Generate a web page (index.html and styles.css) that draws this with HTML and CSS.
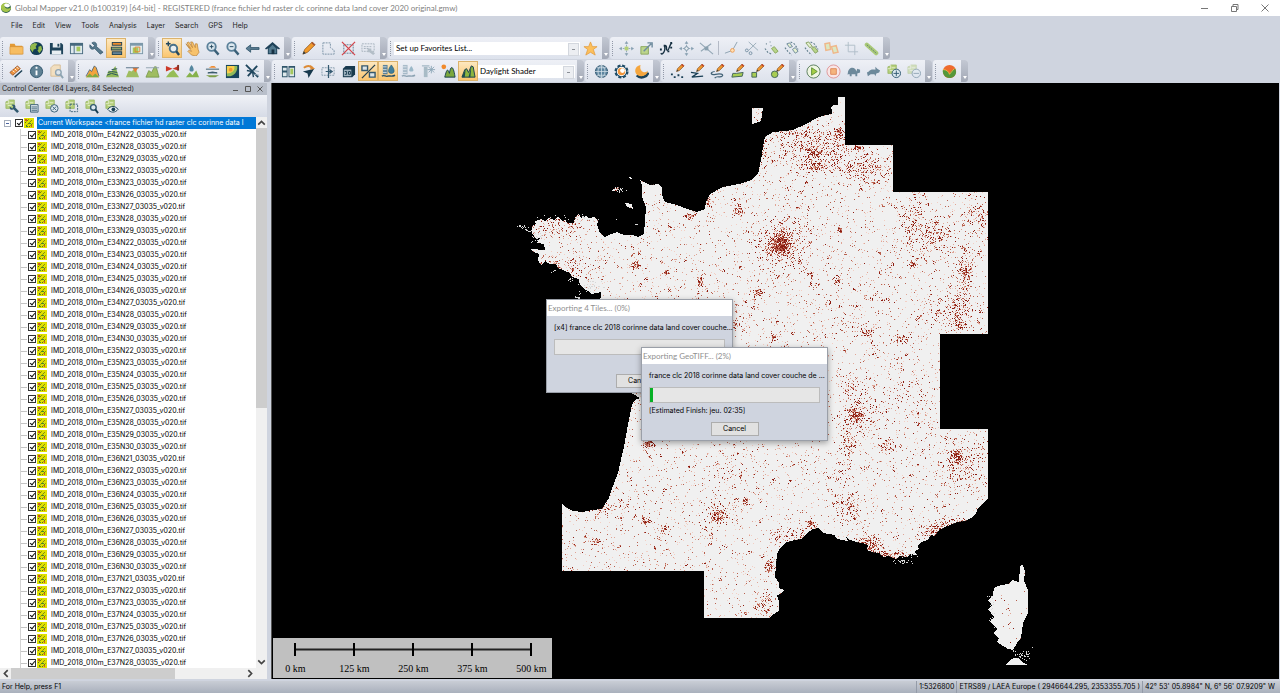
FILE: index.html
```html
<!DOCTYPE html>
<html lang="en">
<head>
    <meta charset="UTF-8">
    <meta name="viewport" content="width=device-width, initial-scale=1.0">
    <title>Global Mapper v21.0</title>
    <link rel="stylesheet" href="styles.css">
</head>
<body>

<!-- Shapes shared by several toolbar icons -->
<svg class="sprite" aria-hidden="true">
    <symbol id="doc" viewBox="0 0 16 16"><path d="M2 3l3-1v-1h6v9H2z" fill="#b5cf7c" stroke="#8eae55" stroke-width=".7"/><path d="M2 5h3V1M6 4h4M4 7h4" fill="none" stroke="#e3edc9"/></symbol>
    <symbol id="pencil" viewBox="0 0 16 16"><path d="M7 8l1-3 5-5 2 2-5 5z" fill="#ee9630" stroke="#7a4a1a" stroke-width=".7"/><path d="M12 1l2 2 1-1-2-2z" fill="#c8402a"/><path d="M7 8l1-2 1 1z" fill="#1f3545"/></symbol>
    <symbol id="lens" viewBox="0 0 16 16"><circle cx="7" cy="6" r="4.500" fill="#dce8ef" stroke="#5b819a" stroke-width="2"/><path d="M10 9.500l4.500 5" stroke="#3a6078" stroke-width="2.500"/></symbol>
    <symbol id="arrows" viewBox="0 0 16 16"><path d="M8 1v14M1 8h14" stroke="#8fa6b6" stroke-dasharray="2 1"/><path d="M8 0l2 3H6zM8 16l2-3H6zM0 8l3-2v4zM16 8l-3-2v4z" fill="#8aa2b3"/></symbol>
    <symbol id="chain" viewBox="0 0 16 16"><path d="M1 7l3 4 4 4M7 1l4 2 4 6" fill="none" stroke="#64808f" stroke-dasharray="2 1.5" stroke-width="1.200"/></symbol>
    <symbol id="well" viewBox="0 0 16 16"><path d="M2 1h5v10H2z" fill="#5d8398"/><path d="M2 3h4M2 6h4M2 9h4" stroke="#cddae2"/><path d="M1 13c2-2 4 1 6 0s4 1 8-1" fill="none" stroke="#24506a" stroke-width="1.500"/></symbol>
</svg>

<div class="window">
    <header class="titlebar">
        <svg class="logo" viewBox="0 0 12 12"><circle cx="6" cy="6" r="5" fill="#2d5f47"/><path d="M1 4a5 5 0 0 1 8-2C6 1 4 3 5 5s4 2 6 0c0 6-9 7-10 1z" fill="#a6c64b"/><path d="M4 3c2-3 6-1 6 1-1 2-5 2-6-1z" fill="#fff"/></svg>
        <h1>Global Mapper v21.0 (b100319) [64-bit] - REGISTERED (france fichier hd raster clc corinne data land cover 2020 original.gmw)</h1>
        <div class="window-buttons">
            <button aria-label="Minimize"><svg viewBox="0 0 8 8"><path d="M0 4.500h7"/></svg></button>
            <button aria-label="Restore"><svg viewBox="0 0 8 8"><path d="M.5 2.500h5v5h-5zM2 2V.5h5v5H6"/></svg></button>
            <button aria-label="Close"><svg viewBox="0 0 8 8"><path d="M.5.5l7 7M7.500.5l-7 7"/></svg></button>
        </div>
    </header>

    <nav class="menu">
        <button>File</button><button>Edit</button><button>View</button><button>Tools</button><button>Analysis</button><button>Layer</button><button>Search</button><button>GPS</button><button>Help</button>
    </nav>

    <div class="toolbar-row">
        <div class="toolbar">
            <button class="tool" aria-label="Open"><svg viewBox="0 0 16 16"><path d="M1 3h5l1 2h7v9H1z" fill="#e39a35"/><path d="M1 6h14v8H1z" fill="#f7bd61" stroke="#cf8a2c" stroke-width=".6"/></svg></button>
            <button class="tool" aria-label="Online data"><svg viewBox="0 0 16 16"><circle cx="8" cy="8" r="7" fill="#123d54"/><path d="M2 4l4-2 3 1-2 3 1 2-3 1-1 3-3-4zM10 6l3-1 1 4-3 4-2-3 1-1z" fill="#92b94d"/></svg></button>
            <button class="tool" aria-label="Save"><svg viewBox="0 0 16 16"><path d="M1 2h12l2 2v10H1z" fill="#1e435a"/><path d="M4 2h8v5H4zM3 10h10v4H3z" fill="#e8eef2"/><path d="M9 3h2v3H9z" fill="#1e435a"/></svg></button>
            <button class="tool" aria-label="Map layout"><svg viewBox="0 0 16 16"><path d="M1 2h14v12H1z" fill="#47697e"/><path d="M2 5h3v8H2zM6 5h8v8H6z" fill="#dfe9ee"/><path d="M8 6h4v5H8z" fill="#a7c85c"/></svg></button>
            <button class="tool" aria-label="Configuration"><svg viewBox="0 0 16 16"><path d="M3 2l3 3-2 2-3-3c-1 4 2 6 5 4l6 6 3-2-7-6c1-4-2-6-5-4z" fill="#56788c" stroke="#274c61" stroke-width=".7"/></svg></button>
            <button class="tool on" aria-label="Control center"><svg viewBox="0 0 16 16"><path d="M3 1h11v4H3zM2 6h12v4H2zM3 11h11v4H3z" fill="#244658"/><path d="M4 2h9v2H4z" fill="#ef8c2b"/><path d="M3 7h10v2H3z" fill="#8ca06a"/><path d="M4 12h9v2H4z" fill="#648497"/></svg></button>
            <button class="tool" aria-label="Overview map"><svg viewBox="0 0 16 16"><path d="M1 2h14v12H1z" fill="#7d99aa"/><path d="M2 5h12v8H2z" fill="#dfe9ee"/><path d="M4 7h6v6H4z" fill="#a7c85c"/><path d="M6.500 6.500h5v5h-5z" fill="none" stroke="#e0862f"/></svg></button>
            <button class="more" aria-label="Toolbar options"></button>
        </div>
        <div class="toolbar">
            <button class="tool on" aria-label="Zoom tool"><svg viewBox="0 0 16 16"><circle cx="9" cy="8" r="4" fill="#e9eef0" stroke="#47708a" stroke-width="2"/><path d="M12 11l3 4" stroke="#24485e" stroke-width="2.500"/><path d="M1 3h5M3.500.5v5" stroke="#24485e" stroke-width="1.500"/></svg></button>
            <button class="tool" aria-label="Pan"><svg viewBox="0 0 16 16"><path d="M1 3l5 5-4-6 2-1 4 6-2-6h2l3 6 0-4 2 0 1 6 1 3-3 4-5-1-4-4 1-1 3 1-4-5z" fill="#f7c26c" stroke="#b57b31" stroke-width=".7"/></svg></button>
            <button class="tool" aria-label="Zoom in"><svg viewBox="0 0 16 16"><use href="#lens"/><path d="M5 6h4M7 4v4" stroke="#24485e"/></svg></button>
            <button class="tool" aria-label="Zoom out"><svg viewBox="0 0 16 16"><use href="#lens"/><path d="M5 6h4" stroke="#24485e"/></svg></button>
            <button class="tool" aria-label="Previous view"><svg viewBox="0 0 16 16"><path d="M1 8l5-4v3h9v2H6v3z" fill="#5d7e93" stroke="#244b62" stroke-width=".8"/></svg></button>
            <button class="tool" aria-label="Full view"><svg viewBox="0 0 16 16"><path d="M8 1l8 7-1 1-2-1v6H3V8L1 9 0 8z" fill="#1f4259"/><path d="M4 8l4-4 4 4v5H4z" fill="#547b90"/><path d="M7 9h3v5H7z" fill="#173244"/></svg></button>
            <button class="more" aria-label="Toolbar options"></button>
        </div>
        <div class="toolbar">
            <button class="tool" aria-label="Digitizer"><svg viewBox="0 0 16 16"><path d="M2 14l2-5 8-8 3 3-8 8z" fill="#f19a2b" stroke="#8b5016" stroke-width=".8"/><path d="M12 1l3 3-1 1-3-3z" fill="#a55031"/><path d="M2 14l1-3 2 2z" fill="#233948"/></svg></button>
            <button class="tool" aria-label="Select area"><svg viewBox="0 0 16 16"><path d="M2 2h8v5l4 3v4H2z" fill="none" stroke="#7890a4" stroke-dasharray="2 1"/></svg></button>
            <button class="tool" aria-label="Clear selection"><svg viewBox="0 0 16 16"><path d="M3 4h10v9H3z" fill="none" stroke="#5f7d91" stroke-dasharray="2 1"/><path d="M1 1l14 14M15 1L1 15" stroke="#d4434a" stroke-width="1.300"/></svg></button>
            <button class="tool" aria-label="Edit selection"><svg viewBox="0 0 16 16"><path d="M1 3h13v8H1zM3 6h9M3 8h6" fill="none" stroke="#a5b1bc" stroke-dasharray="2 1"/><path d="M7 8h4v2l4 3-2 2-4-3H7z" fill="#b3bec7"/></svg></button>
            <button class="more" aria-label="Toolbar options"></button>
        </div>
        <div class="toolbar">
            <div class="combo combo-wide"><select aria-label="Favorites"><option>Set up Favorites List...</option></select></div>
            <button class="tool" aria-label="Add favorite"><svg viewBox="0 0 16 16"><path d="M8 1l2 5h5l-4 3 2 6-5-3-5 3 2-6-4-3h5z" fill="#fcc05d" stroke="#e39b3c" stroke-width=".8"/></svg></button>
            <button class="more" aria-label="Toolbar options"></button>
        </div>
        <div class="toolbar">
            <button class="tool" aria-label="Move"><svg viewBox="0 0 16 16"><use href="#arrows"/><path d="M6 6h4v4H6z" fill="#b4d077"/></svg></button>
            <button class="tool" aria-label="Scale"><svg viewBox="0 0 16 16"><path d="M2 6h8v8H2z" fill="#bcd58c" stroke="#8ca85e"/><path d="M5 11l8-8M9 2h5v5" fill="none" stroke="#6e8b9e" stroke-width="1.500"/></svg></button>
            <button class="tool" aria-label="Reshape"><svg viewBox="0 0 16 16"><path d="M2 13c1 2 3 0 4-3S5 5 7 5s0 5 2 5 2-7 5-8" fill="none" stroke="#152f40" stroke-width="1.500"/><path d="M1 8h2v2H1zM5 4h2v2H5zM9 10h2v2H9zM12 1h2v2h-2zM12 6h2v2h-2z" fill="#152f40"/></svg></button>
            <button class="tool" aria-label="Move vertex"><svg viewBox="0 0 16 16"><use href="#arrows"/><circle cx="8" cy="8" r="2" fill="#e7edf1" stroke="#758fa1"/></svg></button>
            <button class="tool" aria-label="Rotate"><svg viewBox="0 0 16 16"><path d="M1 2l14 12M2 11l11-8" stroke="#93a7b5" stroke-width="1.200"/><path d="M6 6h4v4H6z" fill="#8aa0af"/></svg></button>
            <span class="sep"></span>
            <button class="tool" aria-label="Join"><svg viewBox="0 0 16 16"><path d="M1 13l8-3 5-9" fill="none" stroke="#8ba0af"/><circle cx="9" cy="10" r="2" fill="#ffe0b5" stroke="#ed9c54"/></svg></button>
            <button class="tool" aria-label="Split"><svg viewBox="0 0 16 16"><path d="M5 1l10 9M5 10l8-8" stroke="#98abb8"/><circle cx="3" cy="10" r="1.500" fill="none" stroke="#7891a4"/><circle cx="7" cy="13" r="1.500" fill="none" stroke="#7891a4"/></svg></button>
            <button class="tool" aria-label="Points to line"><svg viewBox="0 0 16 16"><path d="M1 8l3 4 4 2M2 3h1M6 1h1M7 5h1" fill="none" stroke="#64808f" stroke-dasharray="2 1.500" stroke-width="1.200"/><path d="M8 8l3-2 4 5-3 2z" fill="#b9d58a" stroke="#8aa85c"/></svg></button>
            <button class="tool" aria-label="Lines to area"><svg viewBox="0 0 16 16"><use href="#chain"/><path d="M3 3l3-1 3 4-3 1zM9 9l3-2 3 4-3 2z" fill="#e5efcf" stroke="#6d899b"/></svg></button>
            <button class="tool" aria-label="Area to lines"><svg viewBox="0 0 16 16"><use href="#chain"/><path d="M2 2l3-1 4 5-3 1z" fill="#e5efcf" stroke="#85a060"/><path d="M8 8l3-2 4 5-3 2z" fill="#b9d58a" stroke="#85a060"/></svg></button>
            <button class="tool" aria-label="Combine"><svg viewBox="0 0 16 16"><path d="M1 3l5-1 1 7-5 1zM8 6l5-1 2 7-5 1z" fill="#dbe8c2" stroke="#efb78a" stroke-width="1.500"/></svg></button>
            <button class="tool" aria-label="Crop"><svg viewBox="0 0 16 16"><path d="M4.500 1v10.500H15M1 4.500h10.500V15" fill="none" stroke="#b0bec9"/></svg></button>
            <button class="tool" aria-label="Buffer"><svg viewBox="0 0 16 16"><path d="M3 4l10 9" stroke="#a9c977" stroke-width="4.500" stroke-linecap="round"/><path d="M3 4l10 9" stroke="#5f8070" stroke-dasharray="2 1"/></svg></button>
            <button class="more" aria-label="Toolbar options"></button>
        </div>
    </div>

    <div class="toolbar-row">
        <div class="toolbar">
            <button class="tool" aria-label="Measure"><svg viewBox="0 0 16 16"><path d="M1 9l8-7 3 3-8 7z" fill="#ef9540" stroke="#9b5525"/><path d="M6 14l8-7" stroke="#1d4055" stroke-width="1.500"/><path d="M4 7l2 2M6 5l2 2M8 3l2 2" stroke="#fff"/></svg></button>
            <button class="tool" aria-label="Feature info"><svg viewBox="0 0 16 16"><circle cx="8" cy="8" r="6.500" fill="#5f8194" stroke="#2d536a"/><path d="M8 7v5M8 3v2" stroke="#fff" stroke-width="2"/></svg></button>
            <button class="tool" aria-label="Search features"><svg viewBox="0 0 16 16"><path d="M2 4l3-3h7v12H2z" fill="#f2dfc0" stroke="#d6bd95"/><circle cx="10" cy="9" r="3" fill="#dfe6ea" stroke="#8fa5b3" stroke-width="1.500"/><path d="M12 11l3 4" stroke="#8fa5b3" stroke-width="2"/></svg></button>
            <button class="more" aria-label="Toolbar options"></button>
        </div>
        <div class="toolbar">
            <button class="tool" aria-label="Elevation"><svg viewBox="0 0 16 16"><path d="M1 14l4-8 2 2 3-6 2 2 3 10z" fill="#f3a43e"/><path d="M1 14l4-4 3 3 3-3 4 4z" fill="#7eab43"/><path d="M1 13l4-7 2 2 3-6 2 2 3 9" fill="none" stroke="#36536a" stroke-width=".8"/></svg></button>
            <button class="tool" aria-label="Contours"><svg viewBox="0 0 16 16"><path d="M1 14l3-7 3 1 4-6 4 12z" fill="#93b95a"/><path d="M2 12l5-2 7 2M3 9l4-1 6 1M7 6l6-1" fill="none" stroke="#28525a"/></svg></button>
            <button class="tool" aria-label="Watershed"><svg viewBox="0 0 16 16"><path d="M1 14l3-7 3 1 4-4 4 10z" fill="#9fbd60"/><path d="M8 4h6l-3 5z" fill="#e97c35"/><path d="M1 4h14" stroke="#547083"/></svg></button>
            <button class="tool" aria-label="Volume"><svg viewBox="0 0 16 16"><path d="M1 14l3-7 3 2 3-6h2l3 11z" fill="#9fbd60" stroke="#698b3d" stroke-width=".7"/><path d="M1 4h14" stroke="#91a3ae"/></svg></button>
            <button class="tool" aria-label="View shed"><svg viewBox="0 0 16 16"><path d="M1 14l4-5 4-3 6 8z" fill="#96bd55"/><path d="M1 2l7 3 6-3v5L8 5 1 8z" fill="#cd3928"/><path d="M13 1h2v6h-2z" fill="#873326"/></svg></button>
            <button class="tool" aria-label="Water drop"><svg viewBox="0 0 16 16"><path d="M1 14l4-5 3 3 4-5 3 7z" fill="#86b24c"/><path d="M7 1c3 4 3 7 0 7s-3-3 0-7z" fill="#55879f"/></svg></button>
            <button class="tool" aria-label="Flatten"><svg viewBox="0 0 16 16"><path d="M4 4l3-2h3l2 2z" fill="#ef8d35"/><path d="M1 5.500h14M3 9.500l5-1 5 1z" fill="#365769" stroke="#365769"/><path d="M1 12h14l-4 2H5z" fill="#7c9d48"/></svg></button>
            <button class="tool" aria-label="Grid"><svg viewBox="0 0 16 16"><path d="M1 1h14v14H1z" fill="#17455d"/><path d="M2 2h11c1 6-4 12-11 11z" fill="#90bb59"/><path d="M2 2h8c1 5-3 8-8 8z" fill="#f9cf4d"/><circle cx="6" cy="6" r="2" fill="#ed9a32"/></svg></button>
            <button class="tool" aria-label="Fly through"><svg viewBox="0 0 16 16"><path d="M1 1l13 13M3 13L13 2" stroke="#1f465d" stroke-width="2"/><path d="M2 7l6 1 1 6" fill="none" stroke="#1f465d" stroke-width="1.500"/><path d="M9 7l6 1M10 11l5 1" stroke="#8fa5b3"/></svg></button>
            <button class="more" aria-label="Toolbar options"></button>
        </div>
        <div class="toolbar">
            <button class="tool" aria-label="Multi view"><svg viewBox="0 0 16 16"><path d="M1 2h6v12H1zM8 2h7v12H8z" fill="#30566b"/><path d="M2 4h4v3H2zM2 9h4v4H2zM9 4h5v9H9z" fill="#dfe9ec"/><path d="M10 5h3v6h-3z" fill="#a4c75d"/></svg></button>
            <button class="tool" aria-label="Navigate"><svg viewBox="0 0 16 16"><path d="M14 5L8 15 7 10 2 8z" fill="#17394d"/><path d="M3 4c4-3 7-2 9 0" fill="none" stroke="#dd8b36" stroke-width="2"/><path d="M10 1l5 4-5 1z" fill="#dd8b36"/></svg></button>
            <button class="tool" aria-label="Path profile"><svg viewBox="0 0 16 16"><path d="M1 4h13v8H1z" fill="none" stroke="#8199aa" stroke-dasharray="2 1"/><path d="M8 1v14M5 8h7" stroke="#355a71" stroke-width="1.300"/><path d="M9 5l4 3-4 3z" fill="#355a71"/></svg></button>
            <button class="tool" aria-label="3D view"><svg viewBox="0 0 16 16"><path d="M2 5l3-3h10v9l-3 3H2z" fill="#183a4e"/><path d="M3 6h8v7H3z" fill="#9eb2bf"/><path d="M4 8h2v3H4M8 8h2v3H8z" fill="none" stroke="#183a4e"/></svg></button>
            <button class="tool on" aria-label="Auto-clip"><svg viewBox="0 0 16 16"><path d="M1 15L15 1" stroke="#243f4d" stroke-width="1.300"/><path d="M1 2h6v5H1zM9 9h6v5H9z" fill="#dbe5e9" stroke="#34586d" stroke-width="1.500"/></svg></button>
            <button class="tool on" aria-label="Water level"><svg viewBox="0 0 16 16"><use href="#well"/><path d="M11 1c4 5 4 9 0 9s-4-4 0-9z" fill="#417f9c" stroke="#1f546e" stroke-width=".6"/></svg></button>
            <button class="tool" aria-label="Water rise"><svg viewBox="0 0 16 16"><use href="#well" opacity=".45"/><path d="M11 2c3 4 3 6 0 6s-3-2 0-6z" fill="#9bb8c8"/></svg></button>
            <button class="tool" aria-label="Snow level"><svg viewBox="0 0 16 16"><path d="M3 3h4v11H3z" fill="#a8bbc6"/><path d="M1 2h8M11 2v8M7 6h8M8 3l6 6M14 3L8 9" stroke="#8ea8b8"/></svg></button>
            <button class="tool" aria-label="Sun shading"><svg viewBox="0 0 16 16"><path d="M4 14c2-8 3-10 5-4 1-8 4-10 6 4z" fill="#7ba83d" stroke="#183e50"/><circle cx="3" cy="3" r="2.500" fill="#f18a2b"/></svg></button>
            <button class="tool on" aria-label="Hill shading"><svg viewBox="0 0 16 16"><path d="M1 14L4 6l2-1 2 4 3-7 2 1 2 11z" fill="#8bb53f" stroke="#183e50"/><path d="M1 14L5 5l-1 9zM8 14l3-12-1 12z" fill="#1d4d50"/></svg></button>
            <div class="combo combo-narrow"><select aria-label="Shader"><option>Daylight Shader</option></select></div>
            <button class="more" aria-label="Toolbar options"></button>
        </div>
        <div class="toolbar">
            <button class="tool" aria-label="Projection"><svg viewBox="0 0 16 16"><circle cx="8" cy="8" r="6.500" fill="#5e86a0" stroke="#2d536d"/><path d="M1 8h14M8 1v14M3 4h10M3 12h10M8 1C3 5 3 11 8 15M8 1c5 4 5 10 0 14" fill="none" stroke="#d5e2e9" stroke-width=".8"/></svg></button>
            <button class="tool" aria-label="Day and night"><svg viewBox="0 0 16 16"><circle cx="8" cy="8" r="6" fill="#1d4b66" stroke="#1d4b66" stroke-width="3" stroke-dasharray="3 1.700"/><circle cx="8" cy="8" r="5" fill="#fff"/><circle cx="8" cy="8" r="4" fill="#f0953b"/><circle cx="9" cy="7" r="2.500" fill="#fff"/></svg></button>
            <button class="tool" aria-label="Night"><svg viewBox="0 0 16 16"><path d="M3 12c4 4 11 2 12-3" fill="none" stroke="#1b4259" stroke-width="3"/><path d="M7 1C0 2 0 10 4 12s10 1 11-5c-3 4-10 1-8-6z" fill="#f5a63e"/></svg></button>
            <button class="more" aria-label="Toolbar options"></button>
        </div>
        <div class="toolbar">
            <button class="tool" aria-label="New point"><svg viewBox="0 0 16 16"><use href="#pencil"/><path d="M1 10h2v2H1zM4 13h2v2H4zM8 11h2v2H8zM12 13h2v2h-2z" fill="#183e54"/></svg></button>
            <button class="tool" aria-label="New line"><svg viewBox="0 0 16 16"><use href="#pencil"/><path d="M1 9l7 1-6 4 12-1" fill="none" stroke="#183e54" stroke-width="1.300"/></svg></button>
            <button class="tool" aria-label="Trace line"><svg viewBox="0 0 16 16"><use href="#pencil"/><path d="M5 8c-6 1-4 4 1 3s9 0 7 2-6-1-8 2" fill="none" stroke="#426276" stroke-width="1.300"/></svg></button>
            <button class="tool" aria-label="New area"><svg viewBox="0 0 16 16"><use href="#pencil"/><path d="M3 10l4 0 7-1-1 4-11 1z" fill="#a8cd53" stroke="#41625b"/></svg></button>
            <button class="tool" aria-label="New rectangle"><svg viewBox="0 0 16 16"><use href="#pencil"/><path d="M2 9h5v5H2z" fill="#a8cd53" stroke="#41625b"/></svg></button>
            <button class="tool" aria-label="New circle"><svg viewBox="0 0 16 16"><use href="#pencil"/><circle cx="5" cy="11" r="3.500" fill="#a8cd53" stroke="#41625b"/></svg></button>
            <button class="more" aria-label="Toolbar options"></button>
        </div>
        <div class="toolbar">
            <button class="tool" aria-label="Play"><svg viewBox="0 0 16 16"><circle cx="8" cy="8" r="7" fill="#eff6e2" stroke="#5a7d5e"/><path d="M6 4l6 4-6 4z" fill="#a6cf46" stroke="#5d8f36"/></svg></button>
            <button class="tool" aria-label="Stop"><svg viewBox="0 0 16 16"><circle cx="8" cy="8" r="7" fill="#f8e6e6" stroke="#df9699"/><path d="M5 5h6v6H5z" fill="#f4b57e" stroke="#df8a5b"/></svg></button>
            <button class="tool" aria-label="Slower"><svg viewBox="0 0 16 16"><path d="M2 10c0-7 8-8 9-2l1-3 3 1v3l-3 1v3h-2v-2H6v2H4v-2H1z" fill="#6d899b"/></svg></button>
            <button class="tool" aria-label="Faster"><svg viewBox="0 0 16 16"><path d="M1 9l2-1c2-3 5-2 7-2l0-3 2 2 3 2-1 2-3 1-1 3-1-2-4 0-3 2z" fill="#6d899b"/></svg></button>
            <button class="tool" aria-label="Add layer"><svg viewBox="0 0 16 16"><use href="#doc"/><circle cx="11" cy="10" r="4.500" fill="#dce8ef" stroke="#315a73"/><path d="M8 10h6M11 7v6" stroke="#315a73"/></svg></button>
            <button class="tool" aria-label="Remove layer"><svg viewBox="0 0 16 16"><g opacity=".45"><use href="#doc"/><circle cx="11" cy="10" r="4.500" fill="#dce8ef" stroke="#315a73"/><path d="M8 10h6" stroke="#315a73"/></g></svg></button>
            <button class="more" aria-label="Toolbar options"></button>
        </div>
        <div class="toolbar">
            <button class="tool" aria-label="LiDAR"><svg viewBox="0 0 16 16"><circle cx="8" cy="8" r="7" fill="#ee6b2d"/><path d="M1 6c4 0 6 2 7 5 1-3 3-5 6-6 3 5-1 10-6 10-5 0-8-5-7-9z" fill="#54983c"/><path d="M8 11C7 8 5 6 1 6M8 11l5-6" fill="none" stroke="#f9c04b" stroke-width=".8"/></svg></button>
            <button class="more" aria-label="Toolbar options"></button>
        </div>
    </div>

    <main class="workspace">
        <aside class="control-center">
            <div class="panel-title">
                <h2>Control Center (84 Layers, 84 Selected)</h2>
                <button aria-label="Minimize panel"><svg viewBox="0 0 8 8"><path d="M1 5.500h5"/></svg></button>
                <button aria-label="Maximize panel"><svg viewBox="0 0 8 8"><path d="M1.500 1.500h5v5h-5z"/></svg></button>
                <button aria-label="Close panel"><svg viewBox="0 0 8 8"><path d="M1.500 1.500l5 5M6.500 1.500l-5 5"/></svg></button>
            </div>
            <div class="panel-tools">
                <button class="tool" aria-label="Layer options"><svg viewBox="0 0 16 16"><use href="#doc"/><path d="M8 6l2 2-1 2-3-2c0 4 2 4 4 3l4 4 2-2-4-4c1-2-1-4-4-3z" fill="#31596f"/></svg></button>
                <button class="tool" aria-label="Metadata"><svg viewBox="0 0 16 16"><use href="#doc"/><path d="M7 6h8v8H7z" fill="#e4ecf0" stroke="#3b6077"/><path d="M8 8.500h6M8 10.500h6M8 12.500h6" stroke="#3b6077"/></svg></button>
                <button class="tool" aria-label="Close layer"><svg viewBox="0 0 16 16"><use href="#doc"/><circle cx="11" cy="10" r="4" fill="#dce8ef" stroke="#3b6077"/><path d="M9 8l4 4M13 8l-4 4" stroke="#3b6077"/></svg></button>
                <button class="tool" aria-label="Select layers"><svg viewBox="0 0 16 16"><use href="#doc"/><path d="M6.500 5.500h8v8h-8z" fill="none" stroke="#3b6077" stroke-dasharray="2 1"/></svg></button>
                <button class="tool" aria-label="Zoom to layer"><svg viewBox="0 0 16 16"><use href="#doc"/><circle cx="10" cy="9" r="3" fill="#dce8ef" stroke="#31596f" stroke-width="1.500"/><path d="M12 11l3 4" stroke="#183e54" stroke-width="2"/></svg></button>
                <button class="tool" aria-label="Show layer"><svg viewBox="0 0 16 16"><use href="#doc"/><path d="M4 11c3-4 8-4 11 0-3 4-8 4-11 0z" fill="#e9f0f3" stroke="#183e54"/><circle cx="10" cy="11" r="2" fill="#183e54"/></svg></button>
            </div>
            <div class="tree-pane">
                <ul class="tree" id="layerTree">
                    <li class="root"><span class="expander"></span><label><input type="checkbox" checked><svg class="layer" viewBox="0 0 10 10"><use href="#raster"/></svg><span class="name">Current Workspace &lt;france fichier hd raster clc corinne data l</span></label></li>
                </ul>
                <div class="vscroll"><svg viewBox="0 0 10 10"><path d="M2 7l3-3 3 3"/></svg><div class="track"><div class="thumb"></div></div><svg viewBox="0 0 10 10"><path d="M2 3l3 3 3-3"/></svg></div>
            </div>
            <div class="hscroll"><svg viewBox="0 0 10 10"><path d="M7 2L4 5l3 3"/></svg><div class="track"><div class="thumb"></div></div><svg viewBox="0 0 10 10"><path d="M3 2l3 3-3 3"/></svg></div>
        </aside>

        <section class="map">
            <svg class="map-view" viewBox="272 83 1007 596" role="img" aria-label="Map">
                <defs>
                    <symbol id="raster" viewBox="0 0 10 10"><path d="M0 0h10v10H0z" fill="#dfe000"/><path d="M2 8l6-6M5 9l4-4M1 5l4-4" stroke="#5d6b1c" stroke-dasharray="2 1"/><path d="M1 1h2v2H1zM7 7h1v2H7z" fill="#d2571f"/><path d="M5 5h2v1H5zM2 8h2v1H2z" fill="#3f8d32"/></symbol>
                    <path id="land" d="M838 97H845V145H893V192H988V334H940V429H988V498L983 503 978 508 976 513 973 517 965 521 957 522 950 525 943 528 938 531 935 536 931 535 928 540 921 542 918 546 919 549 915 551 916 555 910 554 907 557 900 556 896 559 889 556 883 557 879 553 872 552 867 550 868 545 862 543 856 542 850 540 846 537 848 541 841 540 836 538 835 535 823 533 819 528 813 529 807 533 801 539 795 540 787 542 780 548 777 554 776 565 775 577 779 583 779 588 784 590 781 594 777 595 779 602 779 611 774 614 769 618H704V571H562V504L567 508 573 511 583 512 592 510 602 509 609 498 613 486 618 473 622 455 624 447 627 430 632 405 635 400 640 398 633 394 625 388 613 350 590 305 601 298 601 292 592 294 588 291 583 288 580 284 579 279 572 277 570 273 563 270 558 268 556 264 550 264 545 261 541 265 538 260 539 254 534 252 530 249 545 250 544 244 537 243 540 238 536 239 532 233 532 226 536 224 535 221 541 219 545 221 549 218 554 220 558 217 562 221 566 220 567 223 574 223 575 217 579 214 581 218 586 216 589 218 595 217 598 221 597 225 600 233 605 237 611 234 617 232 624 235 632 235 638 237 644 234 646 207 642 197 642 185 640 180 650 185 659 184 662 188 662 195 665 202 677 205 690 210 697 212 705 209 706 202 710 194 723 187 743 183 751 180 758 174 761 160 763 147 765 137 773 132 784 131 793 130 806 124 817 118 825 115 832 114 832 110 830 108 834 105 838 105Z
                        M752 108H763L761 121 752 124ZM613 189L619 187 617 191 612 191ZM625 203L632 204 633 209 627 207ZM629 177L632 178 631 180Z
                        M1020 567L1021 565 1023 565 1025 571 1024 581 1028 590 1028 613 1023 623 1021 638 1017 643 1013 650 1008 649 997 642 999 638 993 633 997 629 990 622 994 617 988 609 992 605 988 600 993 595 994 588 1001 585 1008 584 1012 580 1019 582ZM1005 665L1009 661 1014 658 1018 658 1022 662 1028 665Z"/>
                    <clipPath id="landClip"><use href="#land"/></clipPath>
                </defs>
                <use href="#land" fill="#f0f0f0" shape-rendering="crispEdges"/>
                <path id="islets" fill="#d8d8d8" shape-rendering="crispEdges"/>
                <g id="builtUp" clip-path="url(#landClip)" shape-rendering="crispEdges"></g>
            </svg>

            <div class="scale">
                <svg viewBox="0 0 238 13"><path d="M0 6.500h238" stroke="#222" stroke-width="2"/><path d="M1 0v13M60 0v13M119 0v13M178 0v13M237 0v13" stroke="#000" stroke-width="2"/></svg>
                <ul><li>0 km</li><li>125 km</li><li>250 km</li><li>375 km</li><li>500 km</li></ul>
            </div>

            <div class="dialog dialog-tiles" role="dialog" aria-labelledby="tilesTitle">
                <h3 id="tilesTitle">Exporting 4 Tiles... (0%)</h3>
                <div class="dialog-body">
                    <label for="tilesProgress">[x4] france clc 2018 corinne data land cover couche...</label>
                    <progress id="tilesProgress" value="0" max="100"></progress>
                    <p></p>
                    <button>Cancel</button>
                </div>
            </div>
            <div class="dialog dialog-tiff" role="dialog" aria-labelledby="tiffTitle">
                <h3 id="tiffTitle">Exporting GeoTIFF... (2%)</h3>
                <div class="dialog-body">
                    <label for="tiffProgress">france clc 2018 corinne data land cover couche de ...</label>
                    <progress id="tiffProgress" value="2" max="100"></progress>
                    <p>[Estimated Finish: jeu. 02:35]</p>
                    <button>Cancel</button>
                </div>
            </div>
        </section>
    </main>

    <footer class="status">
        <span class="hint">For Help, press F1</span>
        <span>1:5326800</span>
        <span>ETRS89 / LAEA Europe ( 2946644.295, 2353355.705 )</span>
        <span>42° 53' 05.8984" N, 6° 56' 07.9209" W</span>
    </footer>
</div>

<script src="app.js"></script>
</body>
</html>
```

FILE: styles.css
```css
* {
    margin: 0;
    padding: 0;
    box-sizing: border-box;
}

body {
    font-family: Inter, "Open Sans", sans-serif;
    font-size: 7px;
    line-height: 12px;
    color: #000;
    background: #cfd4df;
}

button {
    border: none;
    background: none;
    font: inherit;
    color: inherit;
}

ul {
    list-style: none;
}

.sprite {
    position: absolute;
    width: 0;
    height: 0;
}

.window {
    display: flex;
    flex-direction: column;
    height: 100vh;
    overflow: hidden;
}

/* Title bar and menu */
.titlebar {
    display: flex;
    align-items: center;
    height: 16px;
    flex: none;
    background: #fff;
}

.logo {
    width: 12px;
    height: 12px;
    margin-right: 3px;
}

.titlebar h1 {
    flex: 1;
    font-family: Lato, sans-serif;
    font-size: 8px;
    font-weight: 400;
    color: #808080;
    white-space: nowrap;
}

.window-buttons {
    display: flex;
}

.window-buttons button {
    width: 30px;
    height: 14px;
}

.window-buttons svg,
.panel-title svg {
    width: 8px;
    height: 8px;
    fill: none;
    stroke: #777;
    display: block;
    margin: 0 auto;
}

.menu {
    display: flex;
    gap: 10px;
    height: 21px;
    flex: none;
    padding: 0 0 1px 11px;
    color: #222;
}

/* Toolbars */
.toolbar-row {
    display: flex;
    gap: 1px;
    height: 23px;
    flex: none;
    background: #cfd4df;
}

.toolbar {
    display: flex;
    align-items: center;
    height: 22px;
    padding-left: 6px;
    border-radius: 3px;
    background: linear-gradient(#eef0f6, #dde2ec);
    position: relative;
}

.toolbar::before {
    content: "";
    position: absolute;
    left: 2px;
    top: 4px;
    height: 15px;
    border-left: 1px dotted #9299a8;
}

.tool {
    width: 20px;
    height: 20px;
    flex: none;
}

.tool svg {
    display: block;
    width: 15px;
    height: 15px;
    margin: 0 auto;
}

.tool.on {
    border: 1px solid #dcb36c;
    background: linear-gradient(#fde8c0, #fbc66f);
}

.more {
    width: 7px;
    height: 22px;
    margin-left: 2px;
    border-radius: 0 3px 3px 0;
    background: linear-gradient(#c3c8d3, #a3a9b6);
    position: relative;
}

.more::after {
    content: "";
    position: absolute;
    left: 2px;
    bottom: 1px;
    border: 2px solid transparent;
    border-top: 3px solid #fff;
}

.sep {
    width: 1px;
    height: 14px;
    margin: 0 2px;
    background: #b4bac6;
}

.combo {
    position: relative;
    height: 13px;
}

.combo-wide {
    width: 186px;
}

.combo-narrow {
    width: 97px;
}

.combo select {
    display: block;
    width: 100%;
    height: 13px;
    padding-left: 2px;
    appearance: none;
    border: none;
    background: #fff;
    font-family: Lato, sans-serif;
    font-size: 8px;
    color: #000;
}

.combo::after {
    content: "";
    position: absolute;
    right: 1px;
    top: 1px;
    width: 9px;
    height: 11px;
    border: 1px solid #d3d7de;
    background: linear-gradient(#8b8f96, #8b8f96) center / 3px 1px no-repeat #eceef2;
}

/* Control center */
.workspace {
    display: flex;
    flex: 1;
    min-height: 0;
    padding-right: 1px;
    padding-bottom: 2px;
}

.control-center {
    display: flex;
    flex-direction: column;
    width: 267px;
    flex: none;
    margin-right: 4px;
}

.panel-title {
    display: flex;
    align-items: center;
    height: 12px;
    flex: none;
    padding: 0 1px 0 2px;
    background: #b9bfca;
}

.panel-title h2 {
    flex: 1;
    font-size: 7px;
    font-weight: 400;
    color: #222;
}

.panel-title button {
    width: 12px;
    height: 12px;
}

.panel-title svg {
    stroke: #555;
}

.panel-tools {
    display: flex;
    align-items: center;
    height: 22px;
    flex: none;
    padding-left: 1px;
    background: linear-gradient(#f0f2f7, #d6dbe6);
}

.tree-pane {
    display: flex;
    flex: 1;
    min-height: 0;
    background: #fff;
}

.tree {
    flex: 1;
    min-width: 0;
    overflow: hidden;
}

.tree li {
    display: flex;
    align-items: center;
    height: 12px;
    padding-left: 28px;
    white-space: nowrap;
    position: relative;
}

.tree li.root {
    padding-left: 4px;
}

.tree li.leaf::before {
    content: "";
    position: absolute;
    left: 20px;
    top: 0;
    width: 7px;
    height: 6px;
    border-bottom: 1px solid #c4c4c4;
}

.tree li.leaf::after {
    content: "";
    position: absolute;
    left: 20px;
    top: 0;
    height: 12px;
    border-left: 1px solid #d4d4d4;
}

.expander {
    width: 7px;
    height: 7px;
    flex: none;
    margin-right: 4px;
    border: 1px solid #a5adba;
    background: linear-gradient(#4a64a0, #4a64a0) center / 3px 1px no-repeat #fff;
}

.tree label {
    display: flex;
    align-items: center;
}

.root label {
    flex: 1;
}

.tree input {
    appearance: none;
    width: 8px;
    height: 8px;
    margin-right: 1px;
    border: 1px solid #333;
    background: #fff;
    flex: none;
    position: relative;
}

.tree input:checked::after {
    content: "";
    position: absolute;
    left: 2px;
    top: 0;
    width: 2px;
    height: 4px;
    border: solid #111;
    border-width: 0 1px 1px 0;
    transform: rotate(40deg);
}

.layer {
    width: 10px;
    height: 10px;
    margin-right: 4px;
    flex: none;
}

.root .layer {
    margin-right: 3px;
}

.root .name {
    flex: 1;
    padding-left: 1px;
    color: #fff;
    background: #0078d7;
}

.vscroll,
.hscroll {
    display: flex;
    flex: none;
    background: #f0f0f0;
}

.vscroll {
    flex-direction: column;
    width: 11px;
}

.hscroll {
    height: 11px;
    padding-right: 11px;
}

.vscroll svg,
.hscroll svg {
    width: 11px;
    height: 11px;
    flex: none;
    fill: none;
    stroke: #444;
    stroke-width: 1.5;
}

.track {
    flex: 1;
}

.thumb {
    width: 100%;
    height: 100%;
    background: #cdcdcd;
}

.vscroll .thumb {
    height: 53%;
}

.hscroll .thumb {
    width: 70%;
}

/* Map */
.map {
    flex: 1;
    min-width: 0;
    position: relative;
    overflow: hidden;
    background: #000;
    border-left: 1px solid #555;
}

.map-view {
    display: block;
    width: 100%;
    height: 100%;
}

.scale {
    position: absolute;
    left: 1px;
    bottom: 1px;
    width: 279px;
    height: 40px;
    padding: 5px 0 0 21px;
    background: #c0c0c0;
    font-family: "Liberation Serif", serif;
    font-size: 10px;
    color: #000;
}

.scale svg {
    display: block;
    width: 238px;
    height: 13px;
}

.scale ul {
    display: flex;
    margin: 7px 0 0 -28px;
}

.scale li {
    width: 59px;
    flex: none;
    text-align: center;
}

/* Progress dialogs */
.dialog {
    position: absolute;
    width: 187px;
    border: 1px solid #9a9fa8;
    background: #cfd4df;
    box-shadow: 0 2px 6px rgba(0, 0, 0, 0.35);
}

.dialog-tiles {
    left: 274px;
    top: 216px;
}

.dialog-tiff {
    left: 369px;
    top: 264px;
}

.dialog h3 {
    height: 16px;
    padding-left: 1px;
    line-height: 16px;
    background: #fff;
    font-family: Lato, sans-serif;
    font-size: 8px;
    font-weight: 400;
    color: #909090;
}

.dialog-body {
    display: flex;
    flex-direction: column;
    padding: 6px 7px 4px;
}

.dialog label {
    height: 17px;
    white-space: nowrap;
}

.dialog progress {
    display: block;
    appearance: none;
    width: 100%;
    height: 16px;
    border: 1px solid #bcbcbc;
    background: #e6e6e6;
}

.dialog progress::-webkit-progress-bar {
    background: #e6e6e6;
}

.dialog progress::-webkit-progress-value {
    background: #06b025;
}

.dialog p {
    height: 19px;
    padding-top: 2px;
}

.dialog-body button {
    align-self: center;
    width: 48px;
    height: 14px;
    border: 1px solid #adadad;
    background: #e1e1e1;
}

/* Status bar */
.status {
    display: flex;
    height: 12px;
    flex: none;
    padding-right: 3px;
    background: linear-gradient(#c9cdd5, #a9b0bc);
    white-space: nowrap;
}

.status span {
    padding: 0 2px;
    border-left: 1px solid #949ba8;
}

.status .hint {
    flex: 1;
    border-left: none;
}
```

FILE: app.js
```javascript
// Layer tree: column of tiles -> rows present in that column
const tiles = [
    ["E42", [22]],
    ["E32", [28, 29]],
    ["E33", [22, 23, 26, 27, 28, 29]],
    ["E34", [22, 23, 24, 25, 26, 27, 28, 29, 30]],
    ["E35", [22, 23, 24, 25, 26, 27, 28, 29, 30]],
    ["E36", [21, 22, 23, 24, 25, 26, 27, 28, 29, 30]],
    ["E37", [21, 22, 23, 24, 25, 26, 27, 28]]
];

const tree = document.getElementById("layerTree");
let rows = "";
tiles.forEach(function([column, numbers]) {
    numbers.forEach(function(n) {
        rows += '<li class="leaf"><label><input type="checkbox" checked>' +
            '<svg class="layer" viewBox="0 0 10 10"><use href="#raster"/></svg>' +
            '<span>IMD_2018_010m_' + column + 'N' + n + '_03035_v020.tif</span></label></li>';
    });
});
tree.insertAdjacentHTML("beforeend", rows);

// Repeatable random numbers so the map is the same on every load
let seed = 20180;
function random() {
    seed = (seed * 1664525 + 1013904223) % 4294967296;
    return seed / 4294967296;
}

function spread() {
    return random() + random() + random() - 1.5;
}

const colors = ["#f3cfc4", "#dfa596", "#b8604e", "#8c1d12"];
const paths = ["", "", "", ""];

function dot(x, y, shade) {
    paths[shade] += "M" + Math.round(x) + " " + Math.round(y) + "h1v1h-1z";
}

// Scattered villages
for (let i = 0; i < 11000; i++) {
    dot(520 + random() * 465, 95 + random() * 530, Math.floor(random() * 3.1));
}

// Larger villages, a few dots each
for (let i = 0; i < 420; i++) {
    const x = 530 + random() * 455;
    const y = 100 + random() * 515;
    for (let j = 0; j < 6; j++) {
        dot(x + spread() * 2, y + spread() * 2, 1 + Math.floor(random() * 3));
    }
}

// Built-up areas: x, y, radius x, radius y, dots
const towns = [
    [780, 244, 10, 10, 420], [780, 244, 28, 28, 380], [814, 153, 6, 6, 80], [820, 148, 35, 25, 450],
    [838, 132, 5, 7, 70], [857, 147, 6, 3, 50], [862, 168, 28, 14, 220], [812, 166, 20, 5, 90],
    [738, 210, 5, 7, 60], [708, 202, 4, 5, 30], [689, 216, 4, 3, 35], [635, 265, 5, 4, 55],
    [700, 281, 4, 7, 45], [666, 272, 3, 3, 25], [758, 292, 6, 4, 45], [839, 229, 3, 3, 30],
    [837, 280, 4, 5, 35], [912, 225, 12, 30, 180], [937, 235, 18, 18, 170], [965, 272, 9, 24, 150],
    [966, 272, 5, 5, 40], [958, 310, 14, 20, 130], [960, 325, 5, 5, 45], [980, 215, 12, 25, 100],
    [950, 315, 30, 20, 100], [912, 264, 4, 3, 35], [868, 333, 5, 5, 45], [901, 338, 9, 5, 50],
    [773, 337, 4, 4, 35], [733, 325, 6, 6, 40], [856, 415, 8, 7, 140], [860, 418, 24, 26, 200],
    [848, 450, 6, 30, 90], [849, 508, 12, 13, 90], [886, 447, 7, 7, 55], [957, 456, 6, 7, 110],
    [963, 465, 28, 26, 240], [717, 515, 7, 7, 110], [717, 515, 18, 18, 80], [648, 443, 6, 5, 80],
    [646, 521, 5, 4, 40], [664, 529, 4, 5, 30], [596, 541, 4, 3, 35], [605, 507, 16, 8, 70],
    [811, 524, 5, 5, 55], [790, 536, 22, 9, 80], [868, 543, 12, 9, 180], [890, 555, 20, 6, 120],
    [935, 530, 16, 9, 140], [960, 522, 20, 5, 70], [769, 566, 5, 7, 60], [763, 605, 8, 14, 70],
    [746, 501, 4, 4, 30], [780, 408, 6, 6, 40], [850, 325, 20, 12, 50], [850, 385, 12, 12, 50],
    [555, 225, 35, 12, 150], [570, 268, 35, 14, 90], [785, 134, 25, 7, 60], [763, 155, 5, 20, 35],
    [729, 470, 20, 18, 50], [800, 360, 22, 16, 60], [905, 398, 35, 22, 80], [617, 189, 5, 3, 16],
    [1010, 610, 24, 50, 40], [627, 206, 8, 5, 10], [757, 112, 8, 8, 12]
];
towns.forEach(function([x, y, rx, ry, count]) {
    for (let i = 0; i < count; i++) {
        dot(x + spread() * rx, y + spread() * ry, 1 + Math.floor(random() * 3));
    }
});

document.getElementById("builtUp").innerHTML = paths.map(function(d, i) {
    return '<path fill="' + colors[i] + '" d="' + d + '"/>';
}).join("");

// Small islands off the coast: x, y, spread x, spread y, dots
const islands = [
    [522, 226, 4, 3, 12], [527, 230, 4, 3, 10], [536, 236, 6, 7, 24], [552, 271, 3, 2, 4],
    [570, 279, 4, 2, 8], [590, 285, 12, 7, 40], [577, 297, 5, 4, 20], [901, 561, 10, 2, 26],
    [908, 554, 14, 5, 14], [1022, 655, 8, 7, 40], [618, 189, 7, 3, 12], [636, 224, 2, 1, 4],
    [622, 191, 5, 3, 6], [991, 608, 4, 22, 20], [572, 218, 34, 4, 26]
];
let islets = "";
islands.forEach(function([x, y, rx, ry, count]) {
    for (let i = 0; i < count; i++) {
        islets += "M" + Math.round(x + spread() * rx) + " " + Math.round(y + spread() * ry) + "h1v1h-1z";
    }
});
document.getElementById("islets").setAttribute("d", islets);
```
